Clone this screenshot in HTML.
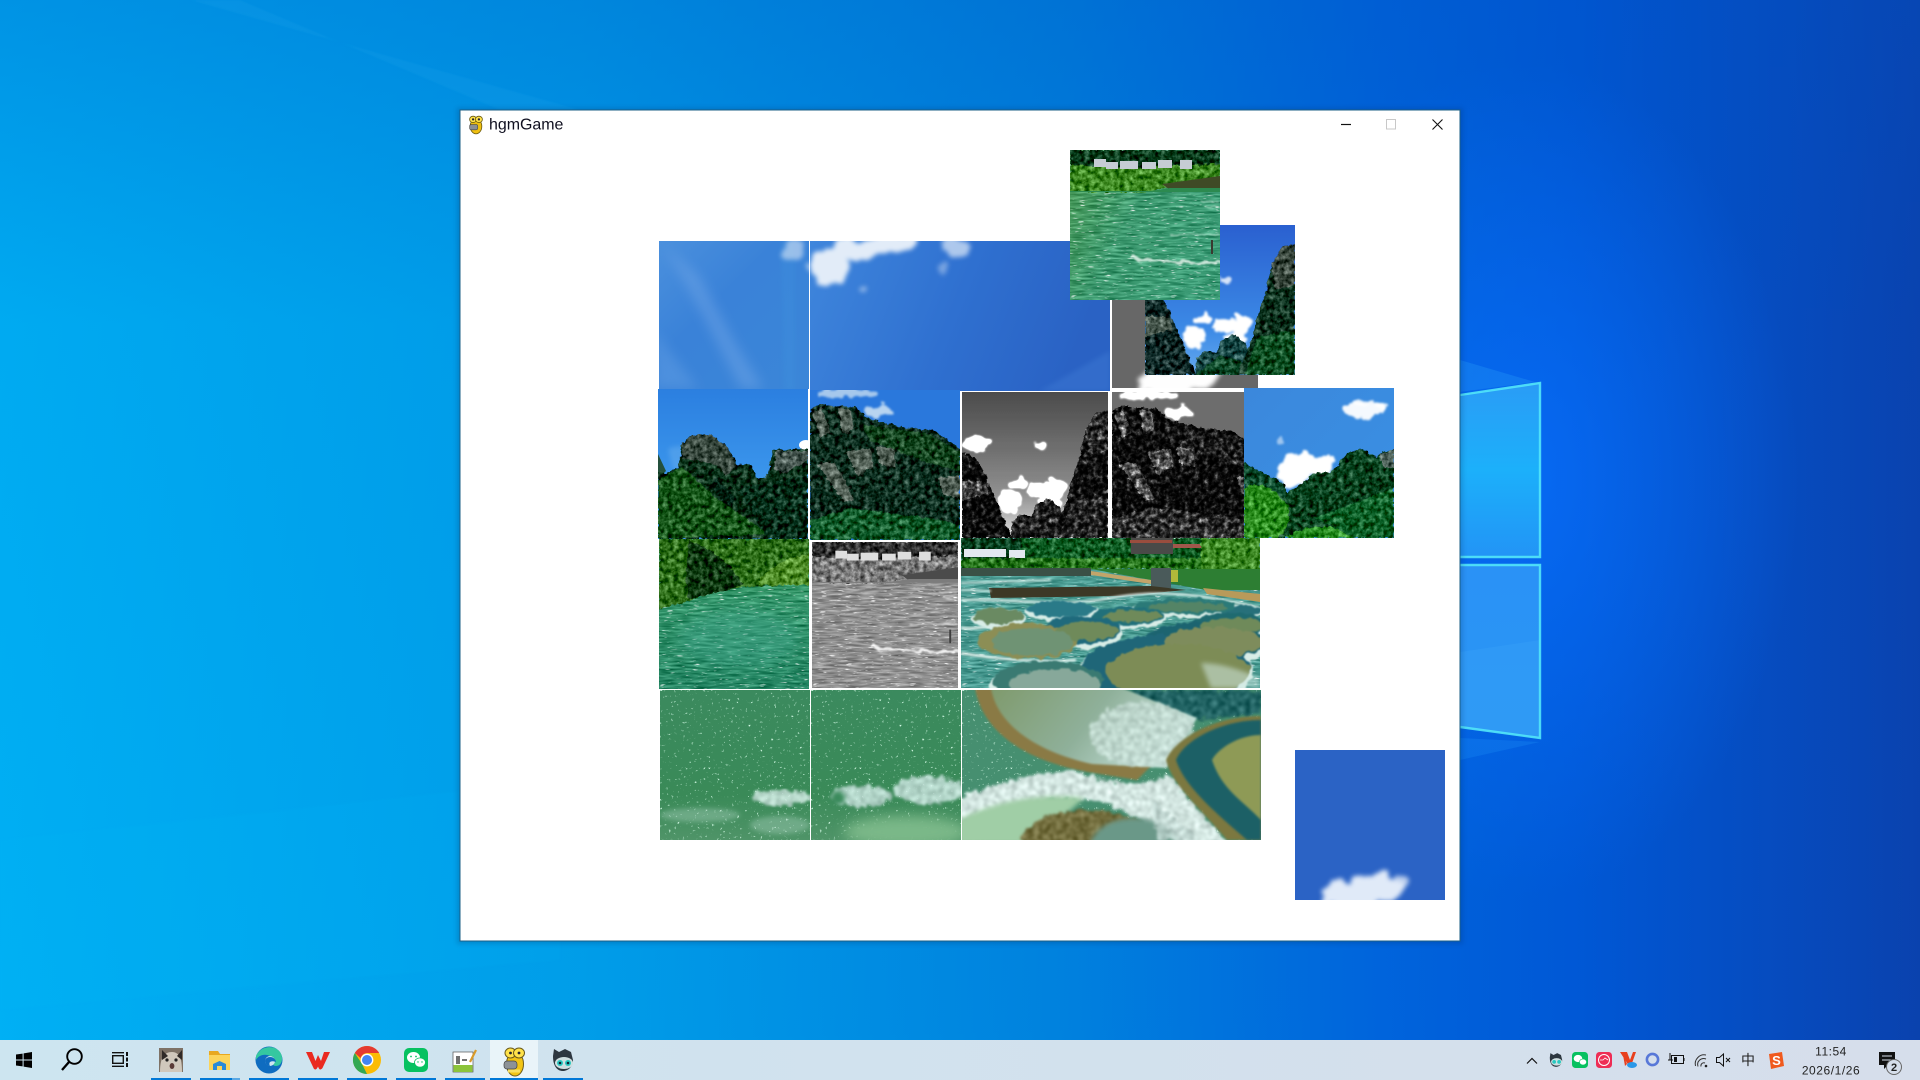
<!DOCTYPE html>
<html><head><meta charset="utf-8"><title>hgmGame</title>
<style>html,body{margin:0;padding:0;width:1920px;height:1080px;overflow:hidden;background:#0080dc}svg{display:block}text{font-family:"Liberation Sans","Noto Sans CJK SC",sans-serif}</style></head>
<body>
<svg xmlns="http://www.w3.org/2000/svg" width="1920" height="1080" viewBox="0 0 1920 1080">
<defs>
<linearGradient id="bg" x1="0" y1="0" x2="1" y2="0"><stop offset="0" stop-color="#00b0f4"/><stop offset=".3" stop-color="#009ee9"/><stop offset=".55" stop-color="#0082de"/><stop offset=".72" stop-color="#0064dc"/><stop offset=".82" stop-color="#0058d6"/><stop offset="1" stop-color="#0a42ae"/></linearGradient>
<linearGradient id="bgt" x1="0" y1="0" x2="0" y2="1"><stop offset="0" stop-color="#0050c0" stop-opacity=".3"/><stop offset=".3" stop-color="#0050c0" stop-opacity=".06"/><stop offset="1" stop-color="#0050c0" stop-opacity="0"/></linearGradient>
<radialGradient id="glow" cx=".5" cy=".5" r=".5"><stop offset="0" stop-color="#0a70ff" stop-opacity=".7"/><stop offset="1" stop-color="#0a70ff" stop-opacity="0"/></radialGradient>
<linearGradient id="pane1" x1="0" y1="0" x2="0" y2="1"><stop offset="0" stop-color="#2a9cf6"/><stop offset=".5" stop-color="#1cb0fa"/><stop offset="1" stop-color="#2294f6"/></linearGradient>
<linearGradient id="pane2" x1="0" y1="0" x2="0" y2="1"><stop offset="0" stop-color="#2a92f6"/><stop offset="1" stop-color="#2a96f4"/></linearGradient>
<linearGradient id="tb" x1="0" y1="0" x2="1" y2="0"><stop offset="0" stop-color="#cde5f0"/><stop offset="1" stop-color="#d6deeb"/></linearGradient>

<filter id="gray" x="0" y="0" width="1" height="1" color-interpolation-filters="sRGB"><feColorMatrix values=".23 .78 .08 0 0 .23 .78 .08 0 0 .23 .78 .08 0 0 0 0 0 1 0"/></filter>
<filter id="gray2" x="0" y="0" width="1" height="1" color-interpolation-filters="sRGB"><feColorMatrix values=".23 .78 .08 0 0 .23 .78 .08 0 0 .23 .78 .08 0 0 0 0 0 1 0"/><feComponentTransfer><feFuncR type="gamma" amplitude="1.9" exponent="2"/><feFuncG type="gamma" amplitude="1.9" exponent="2"/><feFuncB type="gamma" amplitude="1.9" exponent="2"/></feComponentTransfer></filter>
<filter id="b1" x="-30%" y="-30%" width="160%" height="160%"><feGaussianBlur stdDeviation="1"/></filter>
<filter id="b2" x="-40%" y="-40%" width="180%" height="180%"><feGaussianBlur stdDeviation="2.5"/></filter>
<filter id="b5" x="-60%" y="-60%" width="220%" height="220%"><feGaussianBlur stdDeviation="6"/></filter>
<filter id="cl" x="-40%" y="-40%" width="180%" height="180%" color-interpolation-filters="sRGB"><feTurbulence type="fractalNoise" baseFrequency=".07" numOctaves="3" seed="9"/><feDisplacementMap in="SourceGraphic" scale="14" xChannelSelector="R" yChannelSelector="G"/><feGaussianBlur stdDeviation="1.1"/></filter>
<filter id="cl2" x="-40%" y="-40%" width="180%" height="180%" color-interpolation-filters="sRGB"><feTurbulence type="fractalNoise" baseFrequency=".05" numOctaves="3" seed="3"/><feDisplacementMap in="SourceGraphic" scale="20" xChannelSelector="R" yChannelSelector="G"/><feGaussianBlur stdDeviation="2.4"/></filter>
<filter id="rough" x="-5%" y="-5%" width="110%" height="110%" color-interpolation-filters="sRGB"><feTurbulence type="fractalNoise" baseFrequency=".12" numOctaves="2" seed="21"/><feDisplacementMap in="SourceGraphic" scale="7" xChannelSelector="R" yChannelSelector="G"/><feGaussianBlur stdDeviation=".7"/></filter>
<filter id="leaf" x="-3%" y="-3%" width="106%" height="106%" color-interpolation-filters="sRGB"><feTurbulence type="fractalNoise" baseFrequency=".2" numOctaves="3" seed="4" result="t"/><feDisplacementMap in="SourceGraphic" in2="t" scale="5" xChannelSelector="R" yChannelSelector="G" result="d"/><feColorMatrix in="t" values="1 0 0 0 0 1 0 0 0 0 1 0 0 0 0 0 0 0 0 1" result="g"/><feComposite in="d" in2="g" operator="arithmetic" k1="0" k2="1" k3=".85" k4="-.5" result="m"/><feComposite in="m" in2="d" operator="in"/></filter>
<filter id="wat" x="0" y="0" width="1" height="1" color-interpolation-filters="sRGB"><feTurbulence type="fractalNoise" baseFrequency=".06 .5" numOctaves="2" seed="7"/><feColorMatrix values="1 0 0 0 0 1 0 0 0 0 1 0 0 0 0 0 0 0 0 1" result="g"/><feComposite in="SourceGraphic" in2="g" operator="arithmetic" k1="0" k2="1" k3=".5" k4="-.27" result="m"/><feTurbulence type="fractalNoise" baseFrequency=".12 .6" numOctaves="2" seed="11"/><feColorMatrix values="0 0 0 0 1 0 0 0 0 1 0 0 0 0 1 5 0 0 0 -3.3" result="w"/><feMerge result="o"><feMergeNode in="m"/><feMergeNode in="w"/></feMerge><feComposite in="o" in2="SourceAlpha" operator="in"/></filter>
<filter id="spk" x="0" y="0" width="1" height="1" color-interpolation-filters="sRGB"><feTurbulence type="fractalNoise" baseFrequency=".35" numOctaves="2" seed="5"/><feColorMatrix values="0 0 0 0 .85 0 0 0 0 1 0 0 0 0 .92 6 0 0 0 -4.1" result="w"/><feMerge result="o"><feMergeNode in="SourceGraphic"/><feMergeNode in="w"/></feMerge><feComposite in="o" in2="SourceAlpha" operator="in"/></filter>
<filter id="foam" x="-8%" y="-8%" width="116%" height="116%" color-interpolation-filters="sRGB"><feTurbulence type="fractalNoise" baseFrequency=".18" numOctaves="3" seed="13" result="t"/><feDisplacementMap in="SourceGraphic" in2="t" scale="10" xChannelSelector="R" yChannelSelector="G" result="d"/><feColorMatrix in="t" values="1 0 0 0 0 1 0 0 0 0 1 0 0 0 0 0 0 0 0 1" result="g"/><feComposite in="d" in2="g" operator="arithmetic" k1="0" k2="1" k3=".45" k4="-.26" result="m"/><feComposite in="m" in2="d" operator="in" result="c"/><feGaussianBlur in="c" stdDeviation="1.2"/></filter>

<linearGradient id="skyA" x1="0" y1="0" x2="1" y2="1"><stop offset="0" stop-color="#4b90dd"/><stop offset=".4" stop-color="#3a82d8"/><stop offset="1" stop-color="#3b86d8"/></linearGradient>
<linearGradient id="skyB" x1="0" y1="0" x2="1" y2=".2"><stop offset="0" stop-color="#3f86dc"/><stop offset=".55" stop-color="#2f70d0"/><stop offset="1" stop-color="#2a62c4"/></linearGradient>
<linearGradient id="skyM" x1="0" y1="0" x2="0" y2="1"><stop offset="0" stop-color="#2b7fe0"/><stop offset=".6" stop-color="#3b96ec"/><stop offset="1" stop-color="#3b96ec"/></linearGradient>
<linearGradient id="skyV" x1="0" y1="0" x2="0" y2="1"><stop offset="0" stop-color="#2a60d0"/><stop offset=".7" stop-color="#3c8ae6"/><stop offset="1" stop-color="#66aaee"/></linearGradient>
<linearGradient id="skyE" x1="0" y1="0" x2="1" y2="1"><stop offset="0" stop-color="#3b88dc"/><stop offset="1" stop-color="#3a90e4"/></linearGradient>
<linearGradient id="wt1" x1="0" y1="0" x2="0" y2="1"><stop offset="0" stop-color="#2c8c4c"/><stop offset=".4" stop-color="#399a70"/><stop offset="1" stop-color="#2a8a68"/></linearGradient>
<linearGradient id="wt2" x1="0" y1="0" x2="1" y2=".5"><stop offset="0" stop-color="#4f9e5a"/><stop offset=".5" stop-color="#429e74"/><stop offset="1" stop-color="#40a07a"/></linearGradient>
<linearGradient id="gr" x1="0" y1="0" x2="0" y2="1"><stop offset="0" stop-color="#3b8a5e"/><stop offset=".7" stop-color="#3a8a58"/><stop offset="1" stop-color="#4f9468"/></linearGradient>
<linearGradient id="pool" x1="0" y1="0" x2="1" y2=".3"><stop offset="0" stop-color="#7f9a6c"/><stop offset=".55" stop-color="#8fb09a"/><stop offset="1" stop-color="#c4e0d8"/></linearGradient>

<g id="mtnB">
<rect width="150" height="150" fill="#2a78dc"/>
<g filter="url(#cl)"><ellipse cx="35" cy="3" rx="30" ry="5" fill="#a6c8ec"/><ellipse cx="68" cy="20" rx="16" ry="6" fill="#b8d4f0"/></g>
<path d="M0 20L10 14L30 16L45 17L58 28L92 37L122 40L150 58V150H0Z" fill="#1c3f30" filter="url(#leaf)"/>
<path d="M2 22L12 18L20 42L10 48ZM28 18L42 20L44 40L32 44ZM36 62L60 58L64 76L48 86L40 70ZM66 58L84 56L86 78L70 74ZM8 74L24 72L36 92L44 110L34 112L20 92ZM128 88L150 85V108L134 106Z" fill="#66746a" filter="url(#leaf)"/>
<path d="M50 34L120 44L150 62V82L110 70L60 50Z" fill="#23552f" filter="url(#leaf)"/>
<path d="M0 130L40 118L120 128L150 135V150H0Z" fill="#1f6a3a" filter="url(#leaf)"/>
</g>

<g id="valley">
<rect width="150" height="150" fill="url(#skyV)"/>
<g filter="url(#cl)" fill="#fff"><ellipse cx="14" cy="53" rx="15" ry="7"/><ellipse cx="58" cy="93" rx="8" ry="4"/><ellipse cx="47" cy="112" rx="11" ry="12"/><ellipse cx="84" cy="100" rx="18" ry="5"/><ellipse cx="98" cy="100" rx="10" ry="10"/><ellipse cx="90" cy="113" rx="13" ry="6"/><ellipse cx="82" cy="55" rx="5" ry="2.5" opacity=".8"/></g>
<path d="M50 150L52 133L60 126L70 128L76 116L88 109L101 118L110 150Z" fill="#2a5a58" filter="url(#leaf)"/>
<path d="M50 150L75 130L95 135L105 150Z" fill="#1d5a3a" filter="url(#leaf)"/>
<path d="M0 62L14 68L25 86L34 110L42 128L51 150H0Z" fill="#1f3a38" filter="url(#leaf)"/>
<path d="M0 90L24 92L28 104L0 112Z" fill="#5c6c62" filter="url(#leaf)"/>
<path d="M92 150L107 115L112 93L120 70L127 40L137 22L150 19V150Z" fill="#1f4632" filter="url(#leaf)"/>
<path d="M127 40L137 22L150 19V60L130 65Z" fill="#4c5a50" filter="url(#leaf)"/>
<path d="M100 150L112 112L150 105V150Z" fill="#1c5f33" filter="url(#leaf)"/>
</g>

<g id="river">
<rect width="150" height="150" fill="url(#wt2)" filter="url(#wat)"/>
<rect width="150" height="20" fill="#174d2c" filter="url(#leaf)"/>
<path d="M0 15L60 17L150 14V38L100 36L80 42H0Z" fill="#4f9a33" filter="url(#leaf)"/>
<path d="M92 34L150 26V38L100 40Z" fill="#3f4a26"/>
<path d="M0 41L80 41L100 38H150V42H0Z" fill="#2c8a50"/>
<g fill="#c6ccd4"><rect x="24" y="9" width="12" height="8"/><rect x="36" y="12" width="12" height="7"/><rect x="50" y="11" width="18" height="8"/><rect x="72" y="12" width="14" height="7"/><rect x="88" y="10" width="14" height="8"/><rect x="110" y="10" width="12" height="9"/></g>
<g stroke="#e9f5ee" fill="none" filter="url(#rough)" opacity=".8"><path d="M60 107C90 114 120 112 150 113" stroke-width="2.6"/><path d="M130 52H150M135 57H150M100 85H150" stroke-width="1.2" opacity=".7"/></g>
<path d="M142 90V104" stroke="#3a3a30" stroke-width="2"/>
</g>
<g id="blueT">
<rect width="150" height="150" fill="#2b63c5"/>
<g filter="url(#cl2)" fill="#e0eaf8"><ellipse cx="52" cy="146" rx="30" ry="12"/><ellipse cx="82" cy="138" rx="25" ry="15"/><ellipse cx="102" cy="130" rx="10" ry="7" opacity=".8"/></g>
</g>
</defs>

<!-- wallpaper -->
<rect width="1920" height="1080" fill="url(#bg)"/>
<rect width="1920" height="1080" fill="url(#bgt)"/>
<ellipse cx="1520" cy="480" rx="280" ry="420" fill="url(#glow)"/>
<g filter="url(#b1)"><path d="M190 0L580 110L500 110L240 0Z" fill="#3fb8f5" opacity=".1"/><path d="M0 840L560 780V960L0 1010Z" fill="#30c4ff" opacity=".06"/></g>
<path d="M1460 360L1535 382L1460 392Z" fill="#2aa0f8" opacity=".3"/>
<path d="M1460 395L1540 383V557H1460Z" fill="url(#pane1)"/>
<path d="M1460 565H1540V738L1460 727Z" fill="url(#pane2)"/>
<path d="M1460 652L1540 640V738L1460 727Z" fill="#3aa4fa" opacity=".3"/>
<path d="M1460 395L1540 383V557H1460M1460 565H1540V738L1460 727" fill="none" stroke="#52e6f8" stroke-width="2.4" opacity=".9"/>
<path d="M1460 738L1540 742L1460 760Z" fill="#1a90f4" opacity=".3"/>

<!-- window -->
<rect x="457" y="108" width="1006" height="836" fill="#002a60" opacity=".2" filter="url(#b2)"/>
<rect x="460" y="110" width="1000" height="831" fill="#fff" stroke="#1b5f86" stroke-width="1"/>

<!-- tiles -->
<svg x="659" y="241" width="150" height="148" viewBox="0 0 150 148">
<rect width="150" height="148" fill="url(#skyA)"/>
<path d="M5 5L40 35L75 100L105 148H82L52 90L25 40Z" fill="#7eaeea" opacity=".4" filter="url(#b5)"/>
<path d="M-5 90L40 148H-5Z" fill="#6ba4e6" opacity=".4" filter="url(#b5)"/>
<path d="M122 0H136V150H125Z" fill="#3f9ae0" opacity=".2" filter="url(#b2)"/>
<ellipse cx="135" cy="8" rx="11" ry="10" fill="#d8e6f6" opacity=".6" filter="url(#cl2)"/>
<ellipse cx="149" cy="28" rx="4" ry="6" fill="#d8e6f6" opacity=".6" filter="url(#cl2)"/>
</svg>
<svg x="810" y="241" width="300" height="150" viewBox="0 0 300 150">
<rect width="300" height="150" fill="url(#skyB)"/>
<g fill="#e2ecf8" filter="url(#cl2)"><ellipse cx="20" cy="26" rx="18" ry="20"/><ellipse cx="46" cy="8" rx="36" ry="10"/><ellipse cx="80" cy="3" rx="26" ry="8"/><ellipse cx="145" cy="4" rx="14" ry="8" opacity=".7"/><ellipse cx="132" cy="30" rx="4" ry="10" opacity=".4"/><ellipse cx="55" cy="50" rx="4" ry="3" opacity=".5"/></g>
<path d="M230 150L300 110V150Z" fill="#4a86dc" opacity=".3" filter="url(#b2)"/>
</svg>
<g filter="url(#gray)"><svg x="1112" y="242" width="146" height="146" viewBox="0 0 150 150"><use href="#blueT"/></svg></g>
<svg x="658" y="389" width="150" height="150" viewBox="0 0 150 150">
<rect width="150" height="150" fill="url(#skyM)"/>
<path d="M10 60C30 50 50 70 40 85L15 80Z" fill="#7abaf0" opacity=".35" filter="url(#b2)"/>
<ellipse cx="148" cy="56" rx="7" ry="5" fill="#fff"/>
<path d="M0 65L8 82L0 90Z" fill="#24503c"/>
<path d="M0 84L8 84L20 79L24 54L34 46L54 46L70 59L79 76L92 75L99 89L109 89L115 61L150 60V150H0Z" fill="#174028" filter="url(#leaf)"/>
<path d="M24 54L34 46L54 46L70 59L78 76L68 88L60 76L40 72L24 70Z" fill="#4c5c52" filter="url(#leaf)"/>
<path d="M118 62L150 62V72L126 84L116 80Z" fill="#5a6a64" filter="url(#leaf)"/>
<path d="M58 88L78 110L72 120L52 98Z" fill="#0f3526" filter="url(#leaf)"/>
<path d="M0 90L25 78L60 110L112 145L0 150Z" fill="#256528" filter="url(#leaf)"/>
<path d="M80 100L150 85V150H110Z" fill="#123f2a" filter="url(#leaf)"/>
</svg>
<svg x="810" y="390" width="150" height="150" viewBox="0 0 150 150"><use href="#mtnB"/></svg>
<g filter="url(#gray2)"><svg x="962" y="392" width="146" height="146" viewBox="0 0 150 150"><use href="#valley"/></svg></g>
<g filter="url(#gray2)"><svg x="1112" y="392" width="132" height="146" viewBox="0 0 135.6 150"><use href="#mtnB"/></svg></g>
<svg x="1145" y="225" width="150" height="150" viewBox="0 0 150 150"><use href="#valley"/></svg>
<svg x="1070" y="150" width="150" height="150" viewBox="0 0 150 150"><use href="#river"/></svg>
<svg x="1244" y="388" width="150" height="150" viewBox="0 0 150 150">
<rect width="150" height="150" fill="url(#skyE)"/>
<g fill="#fff" filter="url(#cl)"><ellipse cx="120" cy="22" rx="20" ry="8" opacity=".95"/><ellipse cx="118" cy="14" rx="11" ry="4" opacity=".9"/><ellipse cx="138" cy="20" rx="7" ry="4" opacity=".8"/><ellipse cx="55" cy="80" rx="19" ry="15"/><ellipse cx="44" cy="92" rx="12" ry="8"/><ellipse cx="78" cy="78" rx="12" ry="11"/><ellipse cx="38" cy="52" rx="4" ry="3" opacity=".5"/></g>
<path d="M0 74L19 85L38 94L43 105L59 94L73 84L86 85L94 77L103 65L116 61L133 69L138 64L150 62V150H0Z" fill="#175430" filter="url(#leaf)"/>
<path d="M135 66L150 62V80L140 80Z" fill="#6c8078" filter="url(#leaf)"/>
<path d="M0 74L19 85L38 94L42 110L20 104L0 100Z" fill="#1a5a3c" filter="url(#leaf)"/>
<path d="M0 100C15 92 35 100 46 122C44 140 40 150 30 150H0Z" fill="#3b9c2e" filter="url(#leaf)"/>
<path d="M40 150C60 135 90 135 130 150Z" fill="#3b9f34" filter="url(#leaf)"/>
<path d="M70 130L150 100V150H110Z" fill="#1c7038" filter="url(#leaf)"/>
</svg>

<svg x="659" y="539" width="150" height="150" viewBox="0 0 150 150">
<rect width="150" height="150" fill="url(#wt1)" filter="url(#wat)"/>
<ellipse cx="80" cy="100" rx="60" ry="28" fill="#45a890" opacity=".4" filter="url(#b5)"/>
<path d="M0 0H150V45L100 47L70 50L40 58L30 62L0 70Z" fill="#3f7f2a" filter="url(#leaf)"/>
<path d="M30 2C50 8 70 22 85 46L55 54L30 60C25 40 28 20 30 2Z" fill="#1d4a20" filter="url(#leaf)"/>
<path d="M100 40C115 25 135 15 150 15V46H100Z" fill="#63a03c" filter="url(#leaf)"/>
</svg>

<g filter="url(#gray)"><svg x="812" y="542" width="146" height="146" viewBox="0 0 150 150"><use href="#river"/></svg></g>

<svg x="961" y="538" width="299" height="150" viewBox="0 0 299 150">
<rect width="299" height="150" fill="#4e9f96" filter="url(#wat)"/>
<rect width="299" height="25" fill="#13512f" filter="url(#leaf)"/>
<path d="M60 0H240V20H60Z" fill="#1e6d34" filter="url(#leaf)"/>
<path d="M170 0H212V16H170Z" fill="#4a4a48"/><rect x="169" y="2" width="42" height="3" fill="#9a4d3e"/><rect x="212" y="6" width="40" height="4" fill="#a2574b"/>
<g fill="#e3e8f0"><rect x="3" y="11" width="42" height="8"/><rect x="48" y="12" width="16" height="8"/></g>
<rect x="0" y="20" width="299" height="11" fill="#37862c" filter="url(#leaf)"/>
<path d="M240 0H299V32H240Z" fill="#4f9a36" filter="url(#leaf)"/>
<rect x="0" y="30" width="130" height="8" fill="#3a5046"/>
<path d="M130 31H299V52H245L190 42Z" fill="#2d7e33"/>
<path d="M130 33L190 42V46L130 37Z" fill="#c2a56a"/>
<path d="M242 50L299 56V64L246 56Z" fill="#b89a5a"/>
<rect x="190" y="30" width="20" height="20" fill="#4a5a5a"/><rect x="210" y="32" width="7" height="12" fill="#b0b83a"/>
<path d="M28 50L190 48L225 52L160 58L30 60Z" fill="#3c3826"/>
<g stroke="#eaf6f2" fill="none" filter="url(#b1)" stroke-width="2"><path d="M0 62C50 60 100 70 150 60S250 58 299 70"/><path d="M0 45L90 42M0 52L30 53" opacity=".8"/><path d="M0 115C40 122 90 125 115 122M0 90C20 92 40 85 60 85" stroke-width="2.5"/></g>
<g filter="url(#rough)">
<g fill="#d8ede7"><ellipse cx="280" cy="74" rx="22" ry="8"/><ellipse cx="224" cy="70" rx="52" ry="10"/><ellipse cx="100" cy="73" rx="36" ry="10"/><ellipse cx="37" cy="80" rx="27" ry="10"/><ellipse cx="167" cy="80" rx="38" ry="11"/><ellipse cx="267" cy="90" rx="40" ry="14"/><ellipse cx="120" cy="95" rx="42" ry="16"/><ellipse cx="244" cy="107" rx="63" ry="22"/><ellipse cx="204" cy="135" rx="88" ry="37"/><ellipse cx="87" cy="147" rx="58" ry="23"/></g>
<ellipse cx="280" cy="73" rx="20" ry="6" fill="#27707a"/><ellipse cx="224" cy="68" rx="50" ry="8" fill="#2b7a78"/><ellipse cx="100" cy="71" rx="34" ry="8" fill="#2a7a88"/><ellipse cx="37" cy="78" rx="25" ry="8" fill="#6a8a62"/><ellipse cx="167" cy="78" rx="36" ry="9" fill="#21707a"/><ellipse cx="267" cy="87" rx="38" ry="12" fill="#1f6a70"/><ellipse cx="120" cy="92" rx="40" ry="14" fill="#1f6a7c"/><ellipse cx="244" cy="103" rx="60" ry="20" fill="#1c6470"/><ellipse cx="67" cy="103" rx="50" ry="18" fill="#8c8e55"/><ellipse cx="204" cy="132" rx="85" ry="35" fill="#1f6678"/><ellipse cx="87" cy="143" rx="55" ry="20" fill="#3a7a72"/>
<g fill="#6f8a5a"><ellipse cx="226" cy="69" rx="40" ry="5" opacity=".6"/><ellipse cx="172" cy="78" rx="29" ry="6"/><ellipse cx="272" cy="88" rx="32" ry="8"/><ellipse cx="126" cy="93" rx="32" ry="9"/><ellipse cx="252" cy="104" rx="50" ry="15" fill="#7e8c5c"/><ellipse cx="72" cy="104" rx="41" ry="14" fill="#6f9374"/><ellipse cx="217" cy="134" rx="72" ry="28" fill="#7d8c56"/><ellipse cx="94" cy="146" rx="46" ry="15" fill="#87a89a"/></g>
</g>
<path d="M240 125C260 125 280 132 299 140V150H250Z" fill="#d2e9e2" opacity=".55" filter="url(#b2)"/>
</svg>

<svg x="660" y="690" width="150" height="150" viewBox="0 0 150 150">
<rect width="150" height="150" fill="url(#gr)" filter="url(#spk)"/>
<g fill="#d6efe8"><ellipse cx="122" cy="108" rx="30" ry="8" opacity=".85" filter="url(#foam)"/><ellipse cx="40" cy="125" rx="40" ry="7" opacity=".28" filter="url(#b2)"/><ellipse cx="120" cy="135" rx="30" ry="9" opacity=".28" filter="url(#b2)"/></g>
</svg>
<svg x="811" y="690" width="150" height="150" viewBox="0 0 150 150">
<rect width="150" height="150" fill="url(#gr)" filter="url(#spk)"/>
<ellipse cx="95" cy="142" rx="62" ry="16" fill="#7ab888" filter="url(#b5)"/>
<g fill="#cfeae4" opacity=".85" filter="url(#foam)"><ellipse cx="50" cy="106" rx="30" ry="11"/><ellipse cx="118" cy="100" rx="36" ry="14"/></g>
<ellipse cx="27" cy="108" rx="7" ry="7" fill="#3a8a5c" filter="url(#b2)"/>
</svg>
<svg x="962" y="690" width="299" height="150" viewBox="0 0 299 150">
<rect width="299" height="150" fill="#468f70" filter="url(#spk)"/>
<path d="M160 0H299V24L230 30Z" fill="#2a6c6c" filter="url(#foam)"/>
<path d="M13 -2C20 40 60 70 126 82L175 90L195 70L100 -2Z" fill="#8a7a44" filter="url(#b1)"/>
<path d="M29 -2C35 35 75 62 130 74L205 78L235 28L160 -2Z" fill="url(#pool)" filter="url(#b1)"/>
<ellipse cx="180" cy="44" rx="52" ry="32" fill="#cfe6de" opacity=".75" filter="url(#foam)"/>
<path d="M-4 108C50 88 100 74 130 86C160 96 190 96 207 84L245 130L268 154H200C170 112 120 100 60 116L-4 132Z" fill="#dbeee9" filter="url(#foam)"/>
<path d="M-4 130C30 112 80 102 122 108L70 154H-4Z" fill="#a0cea6" filter="url(#b2)"/>
<ellipse cx="125" cy="152" rx="66" ry="32" fill="#7b7646" filter="url(#foam)"/>
<ellipse cx="172" cy="158" rx="44" ry="30" fill="#6a9888" filter="url(#b2)"/>
<path d="M190 108L235 150H195Z" fill="#c9dfda" opacity=".8" filter="url(#foam)"/>
<path d="M299 26C250 26 212 50 204 70C210 95 240 120 265 150H299Z" fill="#7c7840" filter="url(#b1)"/>
<path d="M299 30C260 30 222 50 214 70C222 95 250 120 285 150H299Z" fill="#1e6066" filter="url(#b1)"/>
<path d="M299 45C275 45 255 60 250 70C260 100 280 110 299 130Z" fill="#8e9a56" filter="url(#b1)"/>
</svg>
<svg x="1295" y="750" width="150" height="150" viewBox="0 0 150 150"><use href="#blueT"/></svg>

<!-- title bar -->
<g id="pyi" transform="translate(476 124) scale(.58)"><ellipse cx="0" cy="4" rx="10" ry="13" fill="#f0c010" stroke="#6a5a10" stroke-width="1.4"/><ellipse cx="-5" cy="-8" rx="6" ry="5.5" fill="#ffe24a" stroke="#6a5a10" stroke-width="1.4"/><ellipse cx="5" cy="-8" rx="6" ry="5.5" fill="#ffe24a" stroke="#6a5a10" stroke-width="1.4"/><circle cx="-5" cy="-8" r="2" fill="#223"/><circle cx="5" cy="-8" r="2" fill="#223"/><rect x="-11" y="1" width="14" height="9" rx="3" fill="#8a8f95" stroke="#444"/></g>
<text x="489" y="129.5" font-size="15.95" fill="#101020">hgmGame</text>
<path d="M1341 124.5H1351" stroke="#111" stroke-width="1.2"/>
<rect x="1386.5" y="119.5" width="9" height="9.5" fill="none" stroke="#c8c8c8"/>
<path d="M1432.5 119.5L1442.5 129.5M1442.5 119.5L1432.5 129.5" stroke="#111" stroke-width="1.1"/>

<!-- taskbar -->
<rect y="1040" width="1920" height="40" fill="url(#tb)"/>
<rect x="490" y="1040" width="48" height="40" fill="#e9f4f9"/>
<g fill="#0078d7"><rect x="151" y="1078" width="40" height="2"/><rect x="200" y="1078" width="32" height="2"/><rect x="232" y="1078" width="8" height="2" fill="#5aa8e4"/><rect x="249" y="1078" width="40" height="2"/><rect x="298" y="1078" width="40" height="2"/><rect x="347" y="1078" width="40" height="2"/><rect x="396" y="1078" width="40" height="2"/><rect x="445" y="1078" width="40" height="2"/><rect x="490" y="1078" width="48" height="2"/><rect x="543" y="1078" width="40" height="2"/></g>
<path d="M16 1054.5L22.6 1053.6V1059.5H16ZM23.6 1053.4L32 1052V1059.5H23.6ZM16 1060.5H22.6V1066.4L16 1065.5ZM23.6 1060.5H32V1068L23.6 1066.6Z" fill="#000"/>
<circle cx="74.5" cy="1056.5" r="7.3" fill="none" stroke="#000" stroke-width="1.9"/><path d="M69 1062L62 1070" stroke="#000" stroke-width="2.3"/>
<g fill="none" stroke="#111" stroke-width="1.4"><rect x="112.7" y="1055.7" width="10.6" height="7.6"/><path d="M112 1052.7H124M112 1066.3H124"/></g><g fill="#111"><rect x="126" y="1052" width="2" height="4"/><rect x="126" y="1057.5" width="2" height="4"/><rect x="126" y="1063" width="2" height="4"/></g>
<!-- cat -->
<rect x="159" y="1048" width="24" height="24" fill="#7e7266"/><path d="M160 1072C160 1058 164 1052 172 1052C180 1052 182 1060 182 1072Z" fill="#d0c8bc"/><path d="M162 1050L168 1056L162 1060ZM182 1050L177 1056L182 1060Z" fill="#2f2a28"/><circle cx="167" cy="1060" r="1.6" fill="#222"/><circle cx="176" cy="1060" r="1.6" fill="#222"/><ellipse cx="172" cy="1066" rx="2.4" ry="3" fill="#5a3a36"/>
<!-- folder -->
<path d="M209 1051H218L220 1054H230V1070H209Z" fill="#e8a820"/><rect x="209" y="1055" width="21" height="15" fill="#fcd45a"/><path d="M213 1070V1064L219.5 1061L226 1064V1070H222V1066H217V1070Z" fill="#2a8ad8"/>
<!-- edge -->
<circle cx="269" cy="1060" r="13.5" fill="#0f6cc0"/><path d="M256 1056C260 1046 274 1044 280 1052C284 1058 282 1066 276 1066C270 1066 276 1060 270 1056C264 1053 258 1056 256 1060Z" fill="#35c8a0"/><circle cx="270" cy="1061" r="5" fill="#cfe5f1"/><path d="M265 1061C265 1056 275 1055 276 1062C271 1060 268 1062 270 1066C267 1066 265 1064 265 1061Z" fill="#0f6cc0"/>
<!-- wps -->
<path d="M306 1052L312 1052L315.5 1061L318 1055L321 1061L324 1052L330 1052L322.5 1068C320 1071 319 1069 318 1066.5C317 1069 315 1071 313.5 1068Z" fill="#ea2a20"/>
<!-- chrome -->
<circle cx="367" cy="1060" r="14" fill="#fbbc04"/><path d="M367 1046A14 14 0 0 1 379.2 1053H367A7 7 0 0 0 360.5 1058L354.8 1053A14 14 0 0 1 367 1046Z" fill="#e53a30"/><path d="M354.8 1053L362 1064L367 1074A14 14 0 0 1 354.8 1053Z" fill="#34a853"/><circle cx="367" cy="1060" r="6.4" fill="#fff"/><circle cx="367" cy="1060" r="5" fill="#4285f4"/>
<!-- wechat -->
<rect x="404" y="1048" width="24" height="24" rx="5" fill="#07c160"/><ellipse cx="413.5" cy="1057.5" rx="6.5" ry="5.5" fill="#fff"/><ellipse cx="420" cy="1062.5" rx="5.5" ry="4.6" fill="#fff" stroke="#07c160" stroke-width=".8"/><circle cx="411" cy="1056.5" r=".9" fill="#07c160"/><circle cx="416" cy="1056.5" r=".9" fill="#07c160"/><circle cx="418" cy="1062" r=".7" fill="#07c160"/><circle cx="422" cy="1062" r=".7" fill="#07c160"/>
<!-- notepad -->
<rect x="453" y="1052" width="20" height="20" fill="#fff" stroke="#555" stroke-width=".7"/><rect x="453.5" y="1065" width="19" height="7" fill="#8cc43a"/><path d="M457 1056V1064M459 1056V1064M462 1060H467" stroke="#222" stroke-width="1.3"/><path d="M470 1062L476 1050" stroke="#d89a2a" stroke-width="2.2"/>
<!-- python -->
<g transform="translate(514 1061)"><ellipse cx="1" cy="3" rx="8.5" ry="12" fill="#f2c516" stroke="#6b5a1a" stroke-width="1"/><ellipse cx="-3.5" cy="-8" rx="5.5" ry="5" fill="#ffe24a" stroke="#6b5a1a"/><ellipse cx="5" cy="-8" rx="5.5" ry="5" fill="#ffe24a" stroke="#6b5a1a"/><circle cx="-3.5" cy="-8" r="1.4" fill="#223"/><circle cx="5" cy="-8" r="1.4" fill="#223"/><rect x="-10" y="0" width="13" height="8" rx="3" fill="#8d9297" stroke="#444" stroke-width=".7"/><path d="M-6 10H6" stroke="#f8e060" stroke-width="3"/></g>
<!-- game -->
<g transform="translate(563 1060)"><path d="M-10 -4L-9 -11L-4 -8L2 -11L8 -8L10 0C10 8 4 11 0 11C-6 11 -10 6 -10 -4Z" fill="#2d3740"/><ellipse cx="1" cy="3" rx="9" ry="6" fill="#cfdfe0"/><circle cx="-3" cy="3" r="3" fill="#28c8c0"/><circle cx="5" cy="3" r="3" fill="#28c8c0"/><circle cx="-3" cy="3" r="1.3" fill="#123"/><circle cx="5" cy="3" r="1.3" fill="#123"/></g>

<!-- tray -->
<path d="M1527 1063.5L1532 1058.5L1537 1063.5" fill="none" stroke="#111" stroke-width="1.2"/>
<g transform="translate(1556 1060) scale(.62)"><path d="M-10 -4L-9 -11L-4 -8L2 -11L8 -8L10 0C10 8 4 11 0 11C-6 11 -10 6 -10 -4Z" fill="#2d3740"/><ellipse cx="1" cy="3" rx="9" ry="6" fill="#cfdfe0"/><circle cx="-3" cy="3" r="3" fill="#28c8c0"/><circle cx="5" cy="3" r="3" fill="#28c8c0"/></g>
<rect x="1572" y="1052" width="16" height="16" rx="3.5" fill="#07c160"/><ellipse cx="1578" cy="1058.5" rx="4.3" ry="3.6" fill="#fff"/><ellipse cx="1583" cy="1062" rx="3.6" ry="3" fill="#fff" stroke="#07c160" stroke-width=".6"/>
<rect x="1596" y="1052" width="16" height="16" rx="3.5" fill="#ee2d55"/><circle cx="1604" cy="1060" r="5.5" fill="none" stroke="#fff" stroke-width="1"/><path d="M1600 1060H1603L1605 1058L1608 1060" fill="none" stroke="#fff" stroke-width=".8"/>
<path d="M1620 1052H1627L1630 1060L1633 1052H1636L1631 1066H1629ZM1623 1055L1627 1064L1625 1066Z" fill="#e8401e"/><ellipse cx="1632" cy="1065" rx="5" ry="3" fill="#2a98e8"/>
<circle cx="1652.5" cy="1059.5" r="5.6" fill="none" stroke="#5878d8" stroke-width="2.6"/>
<g fill="none" stroke="#111" stroke-width="1"><rect x="1671.5" y="1055.5" width="12" height="8"/><path d="M1670 1053V1060M1668 1060H1673M1684 1058V1061"/></g><rect x="1674" y="1057" width="3" height="5" fill="#111"/>
<path d="M1695.5 1066A9 9 0 0 1 1706 1055M1698 1066.5A6 6 0 0 1 1706 1059M1701 1066.5A3 3 0 0 1 1705 1063" fill="none" stroke="#333" stroke-width="1"/><circle cx="1706" cy="1066" r="1.3" fill="#222"/>
<path d="M1716.5 1057.5H1719.5L1723.5 1054V1066L1719.5 1062.5H1716.5Z" fill="none" stroke="#111"/><path d="M1726 1058L1730 1062M1730 1058L1726 1062" stroke="#111"/>
<text x="1748" y="1065" font-size="14" fill="#222" text-anchor="middle">中</text>
<path d="M1769 1054L1782 1052L1784 1066L1771 1069Z" fill="#f05a1e"/><text x="1776.5" y="1065" font-size="13" font-weight="bold" fill="#fff" text-anchor="middle">S</text>
<text x="1831" y="1055.5" font-size="12" fill="#222" text-anchor="middle" letter-spacing=".5">11:54</text>
<text x="1831" y="1074.5" font-size="12" fill="#222" text-anchor="middle" letter-spacing=".55">2026/1/26</text>
<path d="M1879 1052H1895V1065H1888L1884 1069V1065H1879Z" fill="#111"/><path d="M1882 1056H1892M1882 1060H1892" stroke="#d6deeb"/>
<circle cx="1894" cy="1067" r="7.5" fill="#d6deeb" stroke="#666"/><text x="1894" y="1071" font-size="11" font-weight="bold" fill="#222" text-anchor="middle">2</text>
</svg>
</body></html>
